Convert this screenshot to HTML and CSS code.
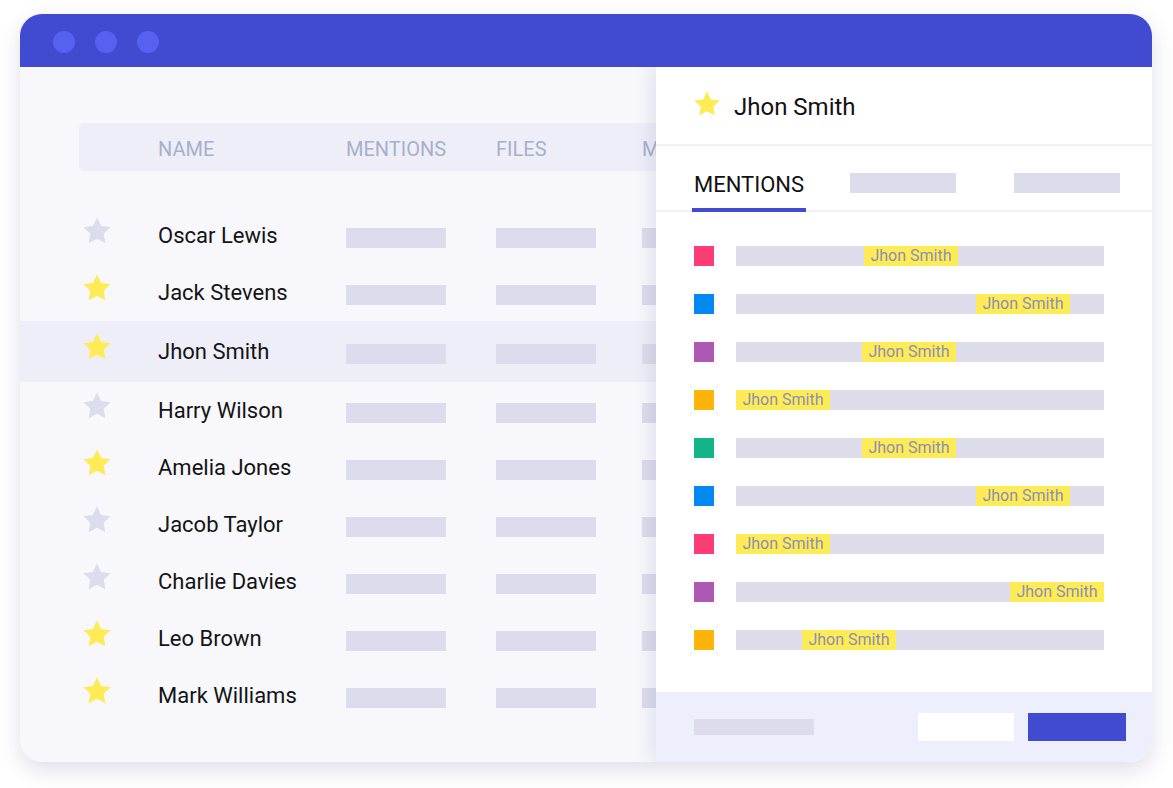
FILE: index.html
```html
<!DOCTYPE html>
<html>
<head>
<meta charset="utf-8">
<link rel="stylesheet" href="styles.css">
</head>
<body>
<svg width="0" height="0" style="position:absolute">
  <defs>
    <symbol id="star" viewBox="0 0 24 24">
      <polygon points="12,1.8 15.1,8.3 22.2,9.2 17,14.1 18.3,21.2 12,17.8 5.7,21.2 7,14.1 1.8,9.2 8.9,8.3"/>
    </symbol>
  </defs>
</svg>
<div class="window">
  <div class="titlebar">
    <span class="dot"></span><span class="dot"></span><span class="dot"></span>
  </div>
  <div class="content">
    <div class="table">
      <div class="thead">
        <span></span><span>NAME</span><span>MENTIONS</span><span>FILES</span><span>MEMBERS</span>
      </div>
      <div class="rows">
        <div class="row"><svg class="star off"><use href="#star"/></svg><span class="name">Oscar Lewis</span><i class="ph"></i><i class="ph"></i><i class="ph"></i></div>
        <div class="row"><svg class="star on"><use href="#star"/></svg><span class="name">Jack Stevens</span><i class="ph"></i><i class="ph"></i><i class="ph"></i></div>
        <div class="row active"><svg class="star on"><use href="#star"/></svg><span class="name">Jhon Smith</span><i class="ph"></i><i class="ph"></i><i class="ph"></i></div>
        <div class="row"><svg class="star off"><use href="#star"/></svg><span class="name">Harry Wilson</span><i class="ph"></i><i class="ph"></i><i class="ph"></i></div>
        <div class="row"><svg class="star on"><use href="#star"/></svg><span class="name">Amelia Jones</span><i class="ph"></i><i class="ph"></i><i class="ph"></i></div>
        <div class="row"><svg class="star off"><use href="#star"/></svg><span class="name">Jacob Taylor</span><i class="ph"></i><i class="ph"></i><i class="ph"></i></div>
        <div class="row"><svg class="star off"><use href="#star"/></svg><span class="name">Charlie Davies</span><i class="ph"></i><i class="ph"></i><i class="ph"></i></div>
        <div class="row"><svg class="star on"><use href="#star"/></svg><span class="name">Leo Brown</span><i class="ph"></i><i class="ph"></i><i class="ph"></i></div>
        <div class="row"><svg class="star on"><use href="#star"/></svg><span class="name">Mark Williams</span><i class="ph"></i><i class="ph"></i><i class="ph"></i></div>
      </div>
    </div>

    <div class="panel">
      <div class="p-head">
        <svg class="star on"><use href="#star"/></svg>
        <span class="p-title">Jhon Smith</span>
      </div>
      <div class="tabs">
        <span class="tab">MENTIONS</span>
        <i class="tab-ph"></i>
        <i class="tab-ph"></i>
      </div>
      <div class="mentions">
        <div class="m-row"><i class="sq pink"></i><div class="m-bar"><span class="hl" style="margin-left:128px">Jhon Smith</span></div></div>
        <div class="m-row"><i class="sq blue"></i><div class="m-bar"><span class="hl" style="margin-left:240px">Jhon Smith</span></div></div>
        <div class="m-row"><i class="sq purple"></i><div class="m-bar"><span class="hl" style="margin-left:126px">Jhon Smith</span></div></div>
        <div class="m-row"><i class="sq orange"></i><div class="m-bar"><span class="hl" style="margin-left:0px">Jhon Smith</span></div></div>
        <div class="m-row"><i class="sq green"></i><div class="m-bar"><span class="hl" style="margin-left:126px">Jhon Smith</span></div></div>
        <div class="m-row"><i class="sq blue"></i><div class="m-bar"><span class="hl" style="margin-left:240px">Jhon Smith</span></div></div>
        <div class="m-row"><i class="sq pink"></i><div class="m-bar"><span class="hl" style="margin-left:0px">Jhon Smith</span></div></div>
        <div class="m-row"><i class="sq purple"></i><div class="m-bar"><span class="hl" style="margin-left:274px">Jhon Smith</span></div></div>
        <div class="m-row"><i class="sq orange"></i><div class="m-bar"><span class="hl" style="margin-left:66px">Jhon Smith</span></div></div>
      </div>
      <div class="p-foot">
        <i class="f-ph"></i>
        <span class="btn btn-white"></span>
        <span class="btn btn-blue"></span>
      </div>
    </div>
  </div>
</div>
</body>
</html>
```

FILE: styles.css
```css
* { box-sizing: border-box; }
html, body {
  margin: 0;
  padding: 0;
  background: #ffffff;
  font-family: Roboto, "Liberation Sans", Arial, sans-serif;
}
body { padding: 14px 21px 26px 20px; }

.window {
  width: 1132px;
  height: 748px;
  border-radius: 22px;
  overflow: hidden;
  background: #f7f7fc;
  box-shadow: 0 8px 22px rgba(50, 55, 110, 0.16);
  display: flex;
  flex-direction: column;
}

.titlebar {
  height: 53px;
  flex: none;
  background: #414bd1;
  display: flex;
  align-items: center;
  gap: 20px;
  padding: 3px 0 0 33px;
}
.dot {
  width: 22px;
  height: 22px;
  border-radius: 50%;
  background: #5661f2;
}

.content {
  position: relative;
  flex: 1;
  overflow: hidden;
}

.table { padding-top: 56px; }

.thead {
  margin-left: 59px;
  width: 1000px;
  height: 48px;
  padding-top: 3px;
  border-radius: 5px;
  background: #edeef8;
  display: grid;
  grid-template-columns: 79px 188px 150px 146px 1fr;
  align-items: center;
  color: #a9aecb;
  font-size: 20px;
}

.rows { margin-top: 36px; }

.row {
  height: 57px;
  display: grid;
  grid-template-columns: 77px 188px 150px 146px 100px;
  align-items: center;
  padding-left: 61px;
}
.row.active {
  height: 61px;
  background: #eeeef8;
}
.name {
  font-size: 22px;
  color: #141414;
}
.ph {
  display: block;
  width: 100px;
  height: 20px;
  background: #dcdcec;
  margin-top: 4px;
}

.star {
  width: 32px;
  height: 32px;
  margin-bottom: 9px;
}
.star.on { fill: #ffeb55; }
.star.off { fill: #dcdcec; }

.panel {
  position: absolute;
  top: 0;
  bottom: 0;
  left: 636px;
  right: 0;
  background: #ffffff;
  box-shadow: -4px 0 18px rgba(50, 55, 110, 0.12);
  display: flex;
  flex-direction: column;
}

.p-head {
  height: 79px;
  flex: none;
  display: flex;
  align-items: center;
  padding: 3px 0 0 36px;
  gap: 12px;
  border-bottom: 2px solid #f0f1f8;
}
.p-head .star {
  width: 30px;
  height: 30px;
  margin: 0 0 6px 0;
}
.p-title {
  font-size: 24px;
  color: #111;
}

.tabs {
  height: 66px;
  flex: none;
  display: flex;
  align-items: flex-end;
  padding-left: 36px;
  border-bottom: 2px solid #f0f1f8;
}
.tab {
  font-size: 22px;
  color: #111;
  padding: 0 2px 11px 2px;
  border-bottom: 4px solid #414bd1;
  width: 114px;
  margin-bottom: -2px;
  line-height: 24px;
  white-space: nowrap;
}
.tab-ph {
  display: block;
  width: 106px;
  height: 20px;
  background: #dcdcec;
  align-self: flex-start;
  margin-top: 27px;
  margin-left: 44px;
}
.tab-ph + .tab-ph { margin-left: 58px; }

.mentions {
  padding: 34px 0 0 38px;
  display: flex;
  flex-direction: column;
  gap: 28px;
}
.m-row {
  display: flex;
  align-items: center;
  gap: 22px;
  height: 20px;
}
.sq {
  display: block;
  width: 20px;
  height: 20px;
}
.pink { background: #ff3c78; }
.blue { background: #0589f0; }
.purple { background: #ad58b4; }
.orange { background: #ffb40c; }
.green { background: #13b38b; }

.m-bar {
  width: 368px;
  height: 20px;
  background: #dcdcec;
  display: flex;
}
.hl {
  width: 94px;
  height: 20px;
  background: #ffeb55;
  color: #8a8fb9;
  font-size: 16px;
  line-height: 20px;
  text-align: center;
}

.p-foot {
  margin-top: auto;
  height: 70px;
  flex: none;
  background: #edf0fc;
  display: flex;
  align-items: center;
  padding: 0 26px 0 38px;
}
.f-ph {
  display: block;
  width: 120px;
  height: 16px;
  background: #dcdcec;
}
.btn {
  display: block;
  width: 96px;
  height: 28px;
}
.btn-white {
  margin-left: auto;
  background: #ffffff;
}
.btn-blue {
  margin-left: 14px;
  width: 98px;
  background: #414bd1;
}
```
